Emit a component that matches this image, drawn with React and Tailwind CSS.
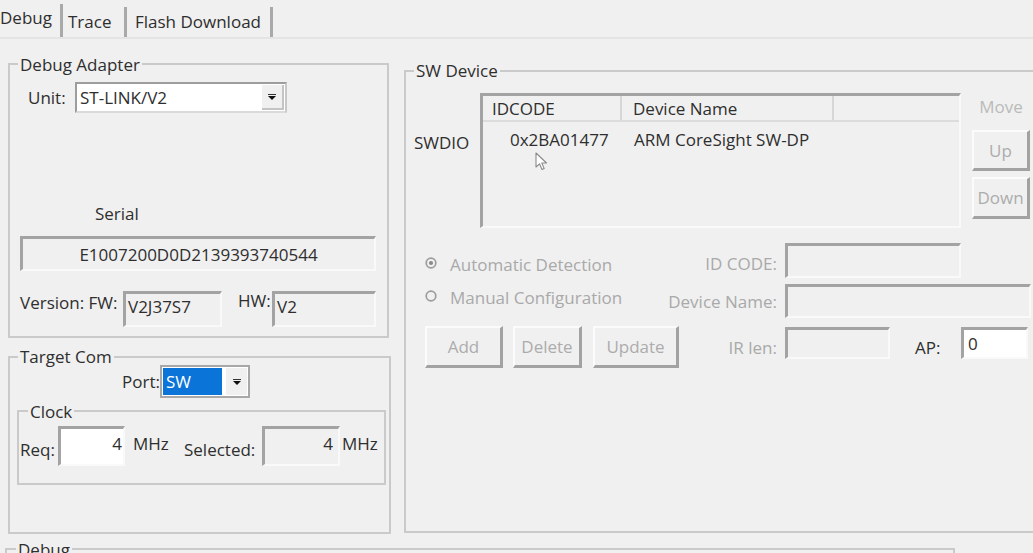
import React from "react";

function Arrow() {
  return (
    <svg width="8" height="6" viewBox="0 0 8 6">
      <rect x="0" y="0" width="8" height="1" fill="#333" />
      <polygon points="0,2 8,2 4,6" fill="#111" />
    </svg>
  );
}

function Radio({ checked }) {
  return (
    <svg width="12" height="12" viewBox="0 0 12 12">
      <circle cx="6" cy="6" r="4.8" fill="#f0f0f0" stroke="#9c9c9c" strokeWidth="1.7" />
      {checked && <circle cx="6" cy="6" r="2.1" fill="#8a8a8a" />}
    </svg>
  );
}

function Cursor() {
  return (
    <svg width="14" height="19" viewBox="0 0 14 19">
      <path
        d="M1 1 L1 15 L4.5 11.8 L7 17.5 L9.2 16.6 L6.8 11 L11.5 11 Z"
        fill="#fff"
        stroke="#8a8a8a"
        strokeWidth="1.1"
        strokeLinejoin="round"
      />
    </svg>
  );
}

function Group({ title, className = "", legendClass = "", children }) {
  return (
    <fieldset className={"border-2 border-[#cacaca] shrink-0 " + className}>
      <legend className={"px-[2px] leading-[17px] " + legendClass}>{title}</legend>
      {children}
    </fieldset>
  );
}

function Sunken({ className = "", children }) {
  return (
    <div
      className={
        "border-t-[3px] border-l-[3px] border-r-2 border-b-2 border-t-[#a3a3a3] border-l-[#a3a3a3] border-r-[#f9f9f9] border-b-[#f9f9f9] shrink-0 " +
        className
      }
    >
      {children}
    </div>
  );
}

function Btn({ className = "", children }) {
  return (
    <div
      className={
        "flex shrink-0 items-center justify-center border-t-2 border-l-2 border-r-[3px] border-b-[3px] border-t-[#fbfbfb] border-l-[#fbfbfb] border-r-[#a2a2a2] border-b-[#a2a2a2] text-[#acacac] " +
        className
      }
    >
      {children}
    </div>
  );
}

export default function App() {
  return (
    <div className="h-[553px] w-[1033px] overflow-hidden bg-[#f0f0f0] font-['Open_Sans',sans-serif] text-[17px] leading-[17px] text-[#2e2e2e]">
      {/* tabs */}
      <div className="flex h-[37px] items-start">
        <div className="-ml-[3px] mt-[4px] h-[33px] w-[66px] border-r-[3px] border-[#a9a9a9] pl-[3px] pt-[5px]">Debug</div>
        <div className="mt-[7px] h-[30px] w-[64px] border-r-[3px] border-[#a9a9a9] pl-[5px] pt-[6px]">Trace</div>
        <div className="mt-[7px] h-[30px] w-[146px] border-r-[3px] border-[#a9a9a9] pl-[8px] pt-[6px]">Flash Download</div>
      </div>

      <div className="flex flex-col border-t-2 border-[#e4e4e4]">
        <div className="flex items-start">
          {/* left column */}
          <div className="flex w-[391px] shrink-0 flex-col pl-[8px]">
            <Group title="Debug Adapter" className="mt-[16.5px] h-[282px] w-[381px]" legendClass="ml-[8px]">
              <div className="mt-[9.5px] flex items-center pl-[18px]">
                <span className="w-[47px]">Unit:</span>
                <div className="flex h-[31px] w-[212px] border-2 border-t-[#9d9d9d] border-l-[#9d9d9d] border-r-[#c8c8c8] border-b-[#dadada] bg-white">
                  <div className="flex flex-1 items-center pl-[3px]">ST-LINK/V2</div>
                  <div className="my-[1px] mr-[1px] flex w-[22px] items-center justify-center border-b-2 border-r-2 border-[#c4c4c4] bg-[#f0f0f0]">
                    <Arrow />
                  </div>
                </div>
              </div>
              <div className="ml-[85px] mt-[91.5px]">Serial</div>
              <Sunken className="ml-[10px] mt-[14.5px] flex h-[35px] w-[356px] items-center justify-center">
                E1007200D0D2139393740544
              </Sunken>
              <div className="ml-[10px] mt-[20px] flex items-start">
                <span className="mt-[2.5px] w-[103px]">Version: FW:</span>
                <Sunken className="h-[36px] w-[99px] pl-[2px] pt-[4px]">V2J37S7</Sunken>
                <span className="ml-[16px] mt-[1px] w-[34px]">HW:</span>
                <Sunken className="h-[36px] w-[104px] pl-[2px] pt-[4px]">V2</Sunken>
              </div>
            </Group>

            <Group title="Target Com" className="mt-[10.5px] h-[185.5px] w-[383px]" legendClass="ml-[8px]">
              <div className="ml-[112px] flex items-center">
                <span className="w-[38px]">Port:</span>
                <div className="flex h-[33px] w-[90px] border-2 border-[#a8a8a8] bg-white p-[1px]">
                  <div className="flex w-[59px] items-center bg-[#0a74d8] pl-[3px] text-white">SW</div>
                  <div className="ml-auto flex w-[21px] items-center justify-center bg-[#f0f0f0]">
                    <Arrow />
                  </div>
                </div>
              </div>

              <Group title="Clock" className="ml-[7px] mt-[4.5px] h-[82.5px] w-[369px]" legendClass="ml-[9px]">
                <div className="ml-[1px] mt-[6.5px] flex items-start">
                  <span className="mt-[14.5px] w-[38px]">Req:</span>
                  <Sunken className="h-[40px] w-[67px] bg-white pr-[1px] pt-[5.5px] text-right">4</Sunken>
                  <span className="ml-[8px] mt-[8.5px] w-[51px]">MHz</span>
                  <span className="mt-[14.5px] w-[78px]">Selected:</span>
                  <Sunken className="h-[40px] w-[78px] pr-[5px] pt-[5.5px] text-right">4</Sunken>
                  <span className="ml-[2px] mt-[8.5px]">MHz</span>
                </div>
              </Group>
            </Group>
          </div>

          {/* SW Device */}
          <Group title="SW Device" className="ml-[13px] mt-[23px] h-[471px] w-[645px]" legendClass="ml-[8px]">
            <div className="flex items-start">
              <span className="ml-[8px] mt-[54.5px] w-[66px]">SWDIO</span>
              <Sunken className="relative mt-[14px] h-[135px] w-[481px]">
                <div className="flex h-[26px] border-b-2 border-[#dcdcdc]">
                  <div className="flex w-[139px] items-center border-r-2 border-[#d6d6d6] pl-[9px]">IDCODE</div>
                  <div className="flex w-[212px] items-center border-r-2 border-[#d6d6d6] pl-[11px]">Device Name</div>
                  <div className="flex-1" />
                </div>
                <div className="flex pt-[8.5px]">
                  <span className="w-[151px] pl-[27px]">0x2BA01477</span>
                  <span>ARM CoreSight SW-DP</span>
                </div>
                <div className="absolute left-[52px] top-[56px]">
                  <Cursor />
                </div>
              </Sunken>
              <div className="ml-[11px] flex w-[58px] flex-col items-center">
                <span className="mt-[18.5px] text-[#bababa]">Move</span>
                <Btn className="mt-[15.5px] h-[41px] w-[58px]">Up</Btn>
                <Btn className="mt-[6px] h-[42px] w-[58px]">Down</Btn>
              </div>
            </div>

            <div className="mt-[15px] flex h-[35px] items-start text-[#a9a9a9]">
              <div className="flex w-[371px] items-start">
                <span className="ml-[19px] mt-[14px]">
                  <Radio checked />
                </span>
                <span className="ml-[13px] mt-[12.5px]">Automatic Detection</span>
                <span className="ml-auto mt-[11.5px]">ID CODE:</span>
              </div>
              <Sunken className="ml-[8px] h-[35px] w-[176px]" />
            </div>

            <div className="mt-[6px] flex h-[34px] items-start text-[#a9a9a9]">
              <div className="flex w-[371px] items-start">
                <span className="ml-[19px] mt-[5.5px]">
                  <Radio />
                </span>
                <span className="ml-[13px] mt-[4.5px]">Manual Configuration</span>
                <span className="ml-auto mt-[8.5px]">Device Name:</span>
              </div>
              <Sunken className="ml-[8px] h-[34px] w-[246px]" />
            </div>

            <div className="mt-[8px] flex items-start">
              <Btn className="ml-[19px] h-[42px] w-[78px]">Add</Btn>
              <Btn className="ml-[10px] h-[42px] w-[69px]">Delete</Btn>
              <Btn className="ml-[11px] h-[42px] w-[86px]">Update</Btn>
              <span className="mt-[12.5px] w-[98px] text-right text-[#a9a9a9]">IR len:</span>
              <Sunken className="ml-[8px] mt-[1px] h-[32px] w-[105px]" />
              <span className="ml-[25px] mt-[12.5px] w-[46px]">AP:</span>
              <Sunken className="mt-[1px] h-[32px] w-[67px] bg-white pl-[4px] pt-[5px]">0</Sunken>
            </div>
          </Group>
        </div>

        <Group title="Debug" className="ml-[5px] mt-[7px] h-[40px] w-[950px] border-[#c4c4c4]" legendClass="ml-[9px]" />
      </div>
    </div>
  );
}
